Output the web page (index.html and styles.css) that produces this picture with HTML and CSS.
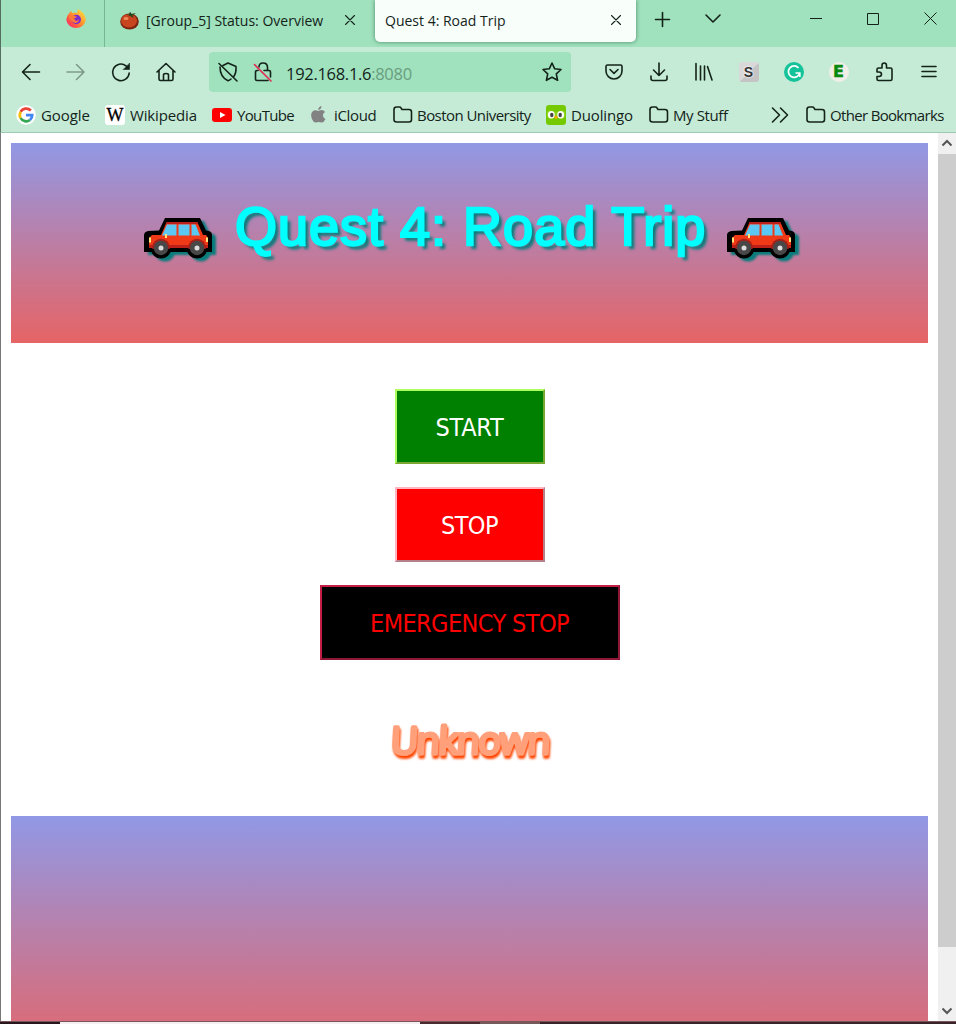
FILE: index.html
```
<!DOCTYPE html>
<html lang="en">
<head>
<meta charset="utf-8">
<title>Quest 4: Road Trip</title>
<link rel="stylesheet" href="styles.css">
</head>
<body>
<svg class="defs" width="0" height="0" aria-hidden="true">
  <defs>
    <linearGradient id="fox" x1="1" y1="0" x2="0" y2="1"><stop offset="0" stop-color="#fff04a"/><stop offset=".45" stop-color="#ff9a2c"/><stop offset=".75" stop-color="#ff4b47"/><stop offset="1" stop-color="#f0259a"/></linearGradient>
    <symbol id="folder" viewBox="0 0 20 18"><path d="M1 3.500Q1 1 3.500 1H6.500Q7.500 1 8 2L9 3.500H16Q18.500 3.500 18.500 6V13.500Q18.500 16 16 16H3.500Q1 16 1 13.500Z"/></symbol>
    <symbol id="cross" viewBox="0 0 10 10"><path d="M.5.5L9.500 9.500M9.500.5L.5 9.500"/></symbol>
    <symbol id="car" viewBox="0 0 68 42">
      <path d="M21 0H56L62 12.500L65 13Q68 14 68 17V34H62.500A10.500 10.500 0 0 1 43.500 34H26.500A10.500 10.500 0 0 1 7.500 34H0V17Q0 14 4 13L15 12.500Z" fill="#000"/>
      <path d="M22.500 4.500H53.500L59 17H62L64 20V30H5V20L8 17H17Z" fill="#f03a17"/>
      <path d="M22.500 4H53.500L54 6H22ZM5 27H64V30H5Z" fill="#bd2019"/>
      <path d="M23 6.500H32.500V17.500H18ZM34.500 6.500H45.500V17.500H34.500ZM47.500 6.500H51.500L56 17.500H47.500Z" fill="#5bc8f4"/>
      <path d="M5 19.500H7V24.500H5ZM62 19.500H64V24H62ZM21 16H23V20H21Z" fill="#ffe37a"/>
      <circle cx="17" cy="29.500" r="8.800" fill="#a3221a"/><circle cx="53" cy="29.500" r="8.800" fill="#a3221a"/>
      <path d="M6.500 31H27.500Q25 40.500 17 40.500Q9 40.500 6.500 31ZM42.500 31H63.500Q61 40.500 53 40.500Q45 40.500 42.500 31Z" fill="#000"/>
      <circle cx="17" cy="30" r="7.200" fill="#484848"/><circle cx="53" cy="30" r="7.200" fill="#484848"/>
      <circle cx="17" cy="30" r="2.500" fill="#ddd"/><circle cx="53" cy="30" r="2.500" fill="#ddd"/>
    </symbol>
  </defs>
</svg>
<div class="window">
  <div class="tabs">
    <div class="pinned"><svg width="20" height="20" viewBox="0 0 20 20"><path d="M3 4.500L5 2L6.500 4Q9 3 11 4L12 0Q19.500 4 19.800 11A9.800 8.800 0 0 1 .3 11Q.2 7 3 4.500Z" fill="url(#fox)"/><circle cx="10.300" cy="10.500" r="4.700" fill="#7a2bd0"/><path d="M3 7Q7 5 11 8L8 9.500L10 12Q12 12 13 10Q13 14 9 14Q5 13 3 7Z" fill="#ff7a36"/></svg></div>
    <div class="tab">
      <svg width="20" height="19" viewBox="0 0 20 19"><ellipse cx="9.500" cy="10.500" rx="9.300" ry="8" fill="#7d2411"/><ellipse cx="9" cy="9.800" rx="8" ry="6.800" fill="#c9451f"/><ellipse cx="6" cy="7.500" rx="2.500" ry="1.500" fill="#ec8d5f"/><path d="M10 5L6 3L9 3.500L10 .5L11.500 3L16 2L12.500 4.500L14 7Z" fill="#28451b"/></svg>
      <span class="tab-title first-title">[Group_5] Status: Overview</span>
      <svg class="line tab-close" width="10" height="10"><use href="#cross"/></svg>
    </div>
    <div class="tab active">
      <span class="tab-title second-title">Quest 4: Road Trip</span>
      <svg class="line tab-close" width="10" height="10"><use href="#cross"/></svg>
    </div>
    <svg class="line new-tab" width="15" height="15" viewBox="0 0 15 15"><path d="M7.500.5V14.500M.5 7.500H14.500"/></svg>
    <svg class="line list-tabs" width="16" height="10" viewBox="0 0 16 10"><path d="M1 1L8 8L15 1"/></svg>
    <div class="controls">
      <svg width="12" height="14" viewBox="0 0 12 14"><path d="M0 6.500H12"/></svg>
      <svg width="12" height="12" viewBox="0 0 12 12"><path d="M.5.5H11.500V11.500H.5Z"/></svg>
      <svg width="13" height="13" viewBox="0 0 13 13"><path d="M.5.5L12.500 12.500M12.500.5L.5 12.500"/></svg>
    </div>
  </div>
  <div class="nav">
    <div class="slots">
      <svg class="line" width="20" height="20" viewBox="0 0 20 20"><path d="M18.500 10H1.500M9 2.500L1.500 10L9 17.500"/></svg>
      <svg class="line dim" width="20" height="20" viewBox="0 0 20 20"><path d="M1 10H18M10.500 2.500L18 10L10.500 17.500"/></svg>
      <svg class="line" width="20" height="20" viewBox="0 0 20 20"><path d="M18.200 11A8.300 8.300 0 1 1 15 3.800L17 5.500"/><path d="M18.500 1.500V7.500H12.500Z" fill="#14231a" stroke-width=".6"/></svg>
      <svg class="line" width="20" height="20" viewBox="0 0 20 20"><path d="M1 10L10 1.500L19 10M3 8.500V17Q3 18.500 4.500 18.500H15.500Q17 18.500 17 17V8.500M7.500 18V13Q7.500 11.500 10 11.500Q12.500 11.500 12.500 13V18"/></svg>
    </div>
    <div class="url">
      <svg class="line" width="20" height="20" viewBox="0 0 20 20"><path d="M5 3.500L10 1L18 4.500Q18.500 11 15.500 15M13 17Q11.500 18.500 10 18.800Q2 15 2 5M1 1.500L19 19"/></svg>
      <svg class="line lock" width="18" height="20" viewBox="0 0 18 20"><path d="M5 5Q5 1 9 1Q13.500 1 13.500 5.500V8.500M4 8.500H3Q1.500 8.500 1.500 10V17Q1.500 18.500 3 18.500H14M10 8.500H15Q16.500 8.500 16.500 10V15"/><path d="M.5 2.500L17 19" stroke="#e22850"/></svg>
      <span class="address">192.168.1.6<span class="port">:8080</span></span>
      <svg class="line star" width="20" height="20" viewBox="0 0 20 20"><path d="M10 1L12.700 6.800L19 7.500L14.300 11.800L15.600 18.300L10 15.200L4.400 18.300L5.700 11.800L1 7.500L7.300 6.800Z"/></svg>
    </div>
    <div class="slots tools">
      <svg class="line" width="18" height="16" viewBox="0 0 18 16"><path d="M2.500 1H15.500Q17 1 17 2.500V7A8 8 0 0 1 1 7V2.500Q1 1 2.500 1ZM5 5.500L9 9.300L13 5.500"/></svg>
      <svg class="line" width="18" height="20" viewBox="0 0 18 20"><path d="M9 1V13M3.500 8L9 13.500L14.500 8M1 14V16.500Q1 18.500 3 18.500H15Q17 18.500 17 16.500V14"/></svg>
      <svg class="line" width="18" height="20" viewBox="0 0 18 20"><path d="M1 1.500V18M5.500 4V18M9.500 4V18M12.500 4.500L17 18"/></svg>
      <span class="badge skribe">S</span>
      <svg width="20" height="20" viewBox="0 0 20 20"><circle cx="10" cy="10" r="10" fill="#15c39a"/><path d="M14.500 6A5.700 5.700 0 1 0 15.300 12M15.800 15V11H11.500" fill="none" stroke="#fff" stroke-width="1.700"/></svg>
      <span class="badge echo">E</span>
      <svg class="line" width="20" height="20" viewBox="0 0 20 20"><path d="M3 10V7.500Q3 6 4.500 6H8V3.500Q8 1 10.200 1Q12.500 1 12.500 3.500V6H16.500Q18 6 18 7.500V17Q18 18.500 16.500 18.500H4.500Q3 18.500 3 17V14.500H5Q7.500 14.500 7.500 12.300Q7.500 10 5 10Z"/></svg>
      <svg class="line" width="16" height="14" viewBox="0 0 16 14"><path d="M1 1.500H15M1 6.500H15M1 11.500H15"/></svg>
    </div>
  </div>
  <div class="bookmarks">
    <a class="mark google"><svg width="20" height="20" viewBox="0 0 20 20"><circle cx="10" cy="10" r="9.800" fill="#fff"/><g fill="none" stroke-width="2.700"><path d="M14.800 5.500A6.400 6.400 0 0 0 4.600 6.900" stroke="#ea4335"/><path d="M4.600 6.900A6.400 6.400 0 0 0 4.600 13.100" stroke="#fbbc05"/><path d="M4.600 13.100A6.400 6.400 0 0 0 14 15" stroke="#34a853"/><path d="M14 15A6.400 6.400 0 0 0 16.200 10.200H10" stroke="#4285f4"/></g></svg><span>Google</span></a>
    <a class="mark wikipedia"><span class="badge wiki">W</span><span>Wikipedia</span></a>
    <a class="mark youtube"><svg width="20" height="14" viewBox="0 0 20 14"><rect width="20" height="14" rx="3" fill="#f00"/><path d="M8 4L13.500 7L8 10Z" fill="#fff"/></svg><span>YouTube</span></a>
    <a class="mark icloud"><svg width="15" height="17" viewBox="0 0 15 17"><path d="M10.500 0Q10.500 3.500 7.200 4Q7 1 10.500 0ZM7.500 5Q9 4 10.500 4Q13 4 14 6Q11.500 7.500 12 10Q12.300 12 14.500 13Q12.500 17 10.500 16.500L7.500 16L5 16.500Q2.500 17 .8 12.500Q-1 7.500 2 5Q4 3.300 7.500 5Z" fill="#828282"/></svg><span>iCloud</span></a>
    <a class="mark boston"><svg class="line" width="20" height="18"><use href="#folder"/></svg><span>Boston University</span></a>
    <a class="mark duolingo"><svg width="20" height="20" viewBox="0 0 20 20"><rect width="20" height="20" rx="3" fill="#75c900"/><path d="M1 7Q3 4.500 7 6L10 7.500L13 6Q17 4.500 19 7V12Q15 16 11 12H9Q5 16 1 12Z" fill="#8ed619"/><ellipse cx="5.300" cy="9.800" rx="3.400" ry="3.800" fill="#fff"/><ellipse cx="14.700" cy="9.800" rx="3.400" ry="3.800" fill="#fff"/><ellipse cx="5.800" cy="10" rx="1.700" ry="2.200" fill="#444"/><ellipse cx="14.200" cy="10" rx="1.700" ry="2.200" fill="#444"/><path d="M8 12L10 10.500L12 12L10 14.500Z" fill="#f9a600"/></svg><span>Duolingo</span></a>
    <a class="mark stuff"><svg class="line" width="20" height="18"><use href="#folder"/></svg><span>My Stuff</span></a>
    <svg class="line more" width="18" height="16" viewBox="0 0 18 16"><path d="M1.500 1L8.500 8L1.500 15M9.500 1L16.500 8L9.500 15"/></svg>
    <a class="mark other"><svg class="line" width="20" height="18"><use href="#folder"/></svg><span>Other Bookmarks</span></a>
  </div>
  <div class="viewport">
    <main>
      <header class="hero">
        <svg class="car" width="68" height="42"><use href="#car"/></svg>
        <h1>Quest 4: Road Trip</h1>
        <svg class="car" width="68" height="42"><use href="#car"/></svg>
      </header>
      <section class="actions">
        <button class="start">START</button>
        <button class="stop">STOP</button>
        <button class="emergency">EMERGENCY STOP</button>
      </section>
      <h2><svg class="status" width="170" height="60" viewBox="0 0 170 60"><text x="5" y="44" textLength="160" lengthAdjust="spacing">Unknown</text></svg></h2>
      <footer></footer>
    </main>
    <div class="scrollbar">
      <svg width="12" height="8" viewBox="0 0 12 8"><path d="M1.500 6.500L6 2L10.500 6.500"/></svg>
      <div class="thumb"></div>
      <svg width="12" height="8" viewBox="0 0 12 8"><path d="M1.500 1.500L6 6L10.500 1.500"/></svg>
    </div>
  </div>
  <div class="edge"></div>
</div>
</body>
</html>
```

FILE: styles.css
```
* { box-sizing: border-box; }
body { margin: 0; background: #fff; font-family: "Open Sans", "Noto Sans", sans-serif; color: #14231a; overflow: hidden; }
svg { display: block; flex: none; }
.defs { position: absolute; }
.line { fill: none; stroke: #14231a; stroke-width: 1.6; stroke-linecap: round; stroke-linejoin: round; overflow: visible; }
.dim { opacity: .4; }
.window { width: 956px; height: 1024px; display: flex; flex-direction: column; overflow: hidden; }

.tabs { height: 47px; flex: none; display: flex; background: #9fe2bd; border-left: 1px solid #55705f; }
.pinned { width: 104px; padding: 9px 0 0 65px; border-right: 1px solid #78b592; }
.tab { width: 270px; height: 42px; display: flex; align-items: center; padding: 0 20px 2px 15px; }
.tab.active { width: 261px; padding: 0 15px 2px 10px; background: #f8fffa; border-radius: 0 0 5px 5px; box-shadow: 0 0 4px rgba(20, 70, 40, .6); }
.tab-title { font-size: 14px; white-space: nowrap; margin-top: 1px; }
.first-title { margin-left: 6px; letter-spacing: 0; }
.second-title { letter-spacing: 0; }
.tab-close { margin-left: auto; stroke-width: 1.1; }
.new-tab { margin: 12px 0 0 19px; }
.list-tabs { margin: 14px 0 0 35px; }
.controls { margin: 12px 19px 0 auto; display: flex; gap: 45px; fill: none; stroke: #14231a; stroke-width: 1; }
.controls svg:nth-child(2) { margin-top: 1px; }

.nav { height: 50px; flex: none; display: flex; align-items: center; background: #c5ebd6; border-left: 1px solid #55705f; padding-left: 7px; }
.slots { display: grid; grid-template-columns: repeat(4, 45px); justify-items: center; align-items: center; }
.url { width: 362px; height: 40px; margin-left: 21px; margin-right: 20px; display: flex; align-items: center; padding: 0 9px; background: #9fe2bd; border-radius: 4px; }
.lock { margin-left: 16px; }
.address { margin: 3px 0 0 14px; font-size: 16.500px; letter-spacing: -.3px; }
.port { color: #6a9d80; }
.star { margin-left: auto; }
.tools { grid-template-columns: repeat(8, 45px); }
.badge { width: 20px; height: 20px; flex: none; display: grid; place-items: center; font-weight: bold; line-height: 20px; }
.skribe { font: bold 14px/20px "Liberation Sans", sans-serif; background: linear-gradient(135deg, #d8d8d8 50%, #c4c4c4 51%); border-radius: 3px; color: #333; text-shadow: 0 0 2px #fff, 0 0 2px #fff; }
.echo { font: 900 16px/20px "DejaVu Sans", sans-serif; background: #f1eee7; border-radius: 50%; color: #078a0d; -webkit-text-stroke: .5px #078a0d; }
.wiki { font: 18px/20px "Liberation Serif", serif; background: #fff; border-radius: 3px; color: #000; -webkit-text-stroke: .3px #000; }

.bookmarks { height: 36px; flex: none; display: flex; align-items: center; background: #c5ebd6; border-left: 1px solid #55705f; border-bottom: 1px solid #9fc9b0; padding-left: 15px; }
.mark { display: flex; align-items: center; gap: 4px; font-size: 15px; letter-spacing: -.35px; white-space: nowrap; flex: none; }
.google { width: 89px; gap: 5px; letter-spacing: -.1px; }
.wikipedia { width: 107px; gap: 5px; letter-spacing: -.15px; }
.youtube { width: 99px; gap: 5px; letter-spacing: -.65px; }
.icloud { width: 82px; gap: 8px; }
.boston { width: 153px; letter-spacing: -.55px; }
.duolingo { width: 103px; gap: 5px; letter-spacing: -.15px; }
.stuff { width: 122px; letter-spacing: -.4px; }
.more { margin-right: 17px; }
.other { letter-spacing: -.67px; }

.viewport { height: 888px; flex: none; display: flex; border-left: 1px solid #777; }
main { width: 937px; height: 888px; padding: 10px; overflow: hidden; display: flex; flex-direction: column; }
.hero { height: 200px; flex: none; display: flex; justify-content: center; background: linear-gradient(#9198e5, #e66465); }
.hero h1 { width: 470px; margin: 43px 22px 0 23px; color: #0ff; font: 54px/80px "Liberation Sans", sans-serif; letter-spacing: 1px; white-space: nowrap; -webkit-text-stroke: 2.4px #0ff; text-shadow: 4px 4px 3px #087b7b; }
.car { margin-top: 75px; overflow: visible; filter: drop-shadow(4px 3px 1px #087b7b); }
.actions { margin-top: 46px; display: flex; flex-direction: column; align-items: center; gap: 23px; }
.actions button { width: 150px; height: 75px; padding: 1px 0 0; border: 2px solid; font: 25px "DejaVu Sans Condensed", "DejaVu Sans", sans-serif; font-stretch: condensed; letter-spacing: -.6px; white-space: nowrap; }
.actions .start { color: #fff; background: #008000; border-color: #adff5f #79a832 #79a832 #adff5f; letter-spacing: -.2px; }
.actions .stop { color: #fff; background: #f00; border-color: #ffb6c1 #b6808b #b6808b #ffb6c1; }
.actions .emergency { width: 300px; color: #f00; background: #000; border-color: #c41e46 #8f1636 #8f1636 #c41e46; }
h2 { height: 60px; margin: 50px 0 46px; display: flex; justify-content: center; }
.status { overflow: visible; fill: #ffa07a; stroke: #ffa07a; stroke-width: 3.5px; stroke-linejoin: round; stroke-linecap: round; font: 500 38px "Open Sans", sans-serif; filter: drop-shadow(1px 3px 1px #ff4500); }
.status text { transform: skewX(-3deg); transform-origin: 85px 44px; }
footer { height: 250px; flex: none; background: linear-gradient(#9198e5, #e66465); }
.scrollbar { width: 18px; display: flex; flex-direction: column; align-items: center; padding: 6px 0; background: #f0f0f0; fill: none; stroke: #555; stroke-width: 2; }
.thumb { width: 18px; height: 793px; margin: 7px 0 auto; background: #cdcdcd; }
.edge { height: 3px; flex: none; border-top: 1px solid #77565b; background: linear-gradient(90deg, #29151c 60px, #f4f0f1 60px 420px, #4c2b2e 420px 480px, #775959 480px 540px, #3a2328 540px); }
```
